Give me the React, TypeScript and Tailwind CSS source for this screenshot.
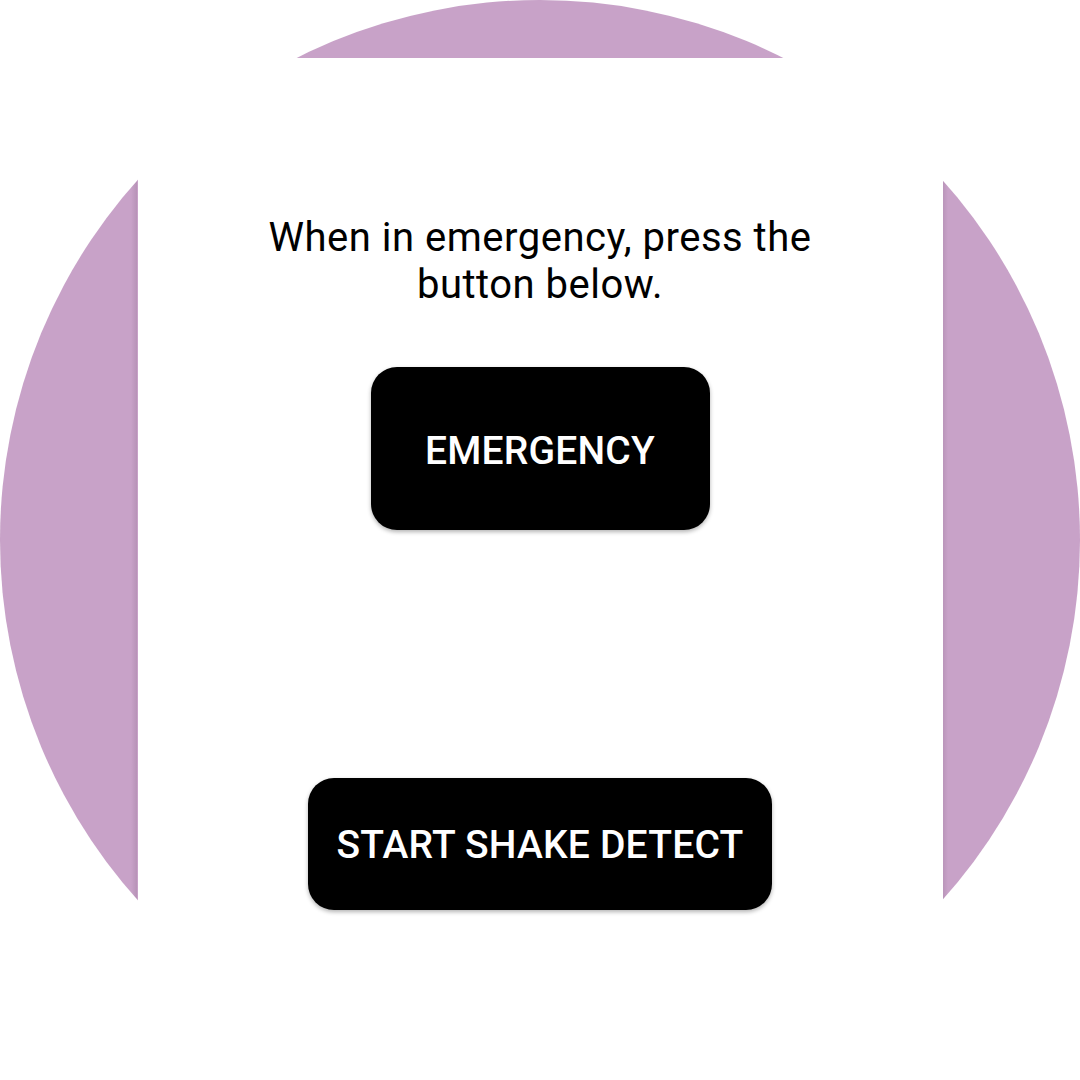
export default function App() {
  return (
    <div className="w-[1080px] h-[1080px] bg-white overflow-hidden" style={{ fontFamily: "Roboto, 'Noto Sans', sans-serif" }}>
      <div className="w-[1080px] h-[1080px] rounded-full bg-[#c8a2c8] bg-[linear-gradient(to_right,#c8a2c8_131px,#b793b7_137px,#c8a2c8_137px,#c8a2c8_942px,#b793b7_942px,#c8a2c8_948px)] flex justify-center pt-[58px]">
        <div className="w-[805px] h-[1022px] bg-white flex flex-col items-center pt-[156px]">
          <p className="text-[40px] leading-[47px] tracking-[0.5px] text-black text-center w-[640px]">
            When in emergency, press the button below.
          </p>
          <button className="mt-[59px] w-[339px] h-[163px] rounded-[26px] bg-black text-white text-[39px] tracking-[0.2px] font-medium shadow-[0_2px_4px_rgba(0,0,0,0.3)] flex items-center justify-center pt-[6px]">
            EMERGENCY
          </button>
          <button className="mt-[248px] w-[464px] h-[132px] rounded-[26px] bg-black text-white text-[39px] tracking-[0.2px] font-medium shadow-[0_2px_4px_rgba(0,0,0,0.3)] flex items-center justify-center pt-[3px]">
            START SHAKE DETECT
          </button>
        </div>
      </div>
    </div>
  );
}
